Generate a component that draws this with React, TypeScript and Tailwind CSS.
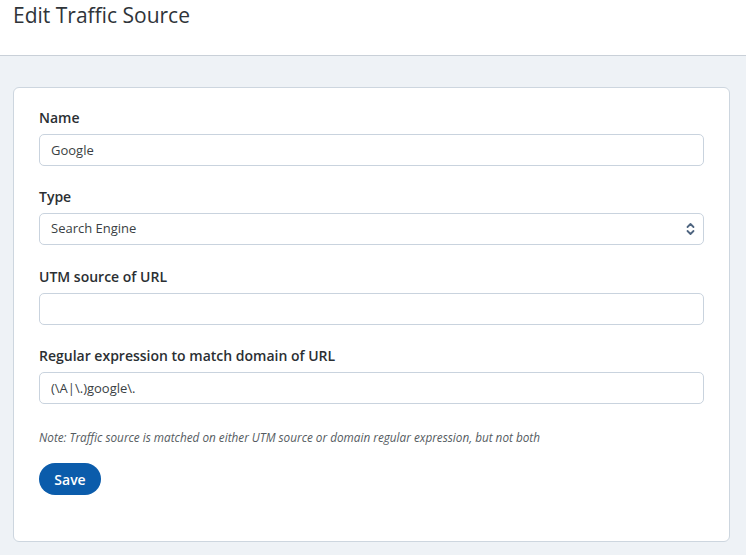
import React from "react";

function Field({ label, children }: { label: string; children: React.ReactNode }) {
  return (
    <div className="flex flex-col">
      <label className="text-[14px] font-semibold leading-[17px] text-[#2b2f33] mb-[8px]">{label}</label>
      {children}
    </div>
  );
}

function TextInput({ value }: { value: string }) {
  return (
    <input
      readOnly
      value={value}
      className="h-[32px] w-full rounded-[5px] border border-[#c9d3de] bg-white px-[11px] text-[13px] text-[#3a3f44] outline-none"
    />
  );
}

export default function App() {
  return (
    <div className="w-[746px] h-[555px] flex flex-col bg-[#eef2f6] overflow-hidden" style={{ fontFamily: "'Open Sans', 'Liberation Sans', sans-serif" }}>
      <div className="h-[56px] shrink-0 bg-white border-b border-[#c9d0d8] px-[13px] pt-[1px]">
        <h1 className="text-[21px] leading-[28px] text-[#2f3439]">Edit Traffic Source</h1>
      </div>
      <div className="pt-[31px] px-[13px] pr-[16px]">
        <div className="bg-white rounded-[6px] border border-[#cdd6df] pt-[21px] px-[25px] pb-[46px] flex flex-col">
          <div className="flex flex-col gap-[22px]">
            <Field label="Name">
              <TextInput value="Google" />
            </Field>
            <Field label="Type">
              <div className="relative h-[32px] w-full rounded-[5px] border border-[#c9d3de] bg-white px-[11px] flex items-center text-[13px] text-[#3a3f44]">
                <span>Search Engine</span>
                <svg className="absolute right-[8px] top-1/2 -translate-y-1/2" width="9" height="14" viewBox="0 0 9 14" fill="none" stroke="#4f6580" strokeWidth="1.8" strokeLinecap="round" strokeLinejoin="round">
                  <path d="M1.5 5 L4.5 2 L7.5 5" />
                  <path d="M1.5 9 L4.5 12 L7.5 9" />
                </svg>
              </div>
            </Field>
            <div className="mt-[1px]">
              <Field label="UTM source of URL">
                <TextInput value="" />
              </Field>
            </div>
            <Field label="Regular expression to match domain of URL">
              <TextInput value="(\A|\.)google\." />
            </Field>
          </div>
          <p className="mt-[26px] text-[11.75px] italic leading-[14px] text-[#555b61]">
            Note: Traffic source is matched on either UTM source or domain regular expression, but not both
          </p>
          <div className="mt-[19px]">
            <button className="h-[32px] w-[62px] rounded-full bg-[#0b5cab] text-[14px] font-semibold text-white">Save</button>
          </div>
        </div>
      </div>
    </div>
  );
}
